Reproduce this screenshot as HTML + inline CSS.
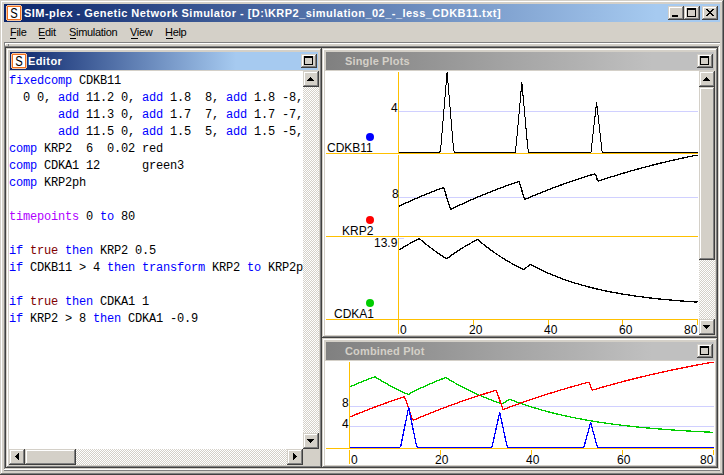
<!DOCTYPE html><html><head><meta charset="utf-8"><style>*{box-sizing:border-box}
html,body{margin:0;padding:0;width:724px;height:475px;overflow:hidden;background:#d4d0c8}
body>div,body>span,body>svg{position:absolute;display:block}
span{white-space:pre}
.chk{background-color:#fff;background-image:linear-gradient(45deg,#d4d0c8 25%,transparent 25%,transparent 75%,#d4d0c8 75%),linear-gradient(45deg,#d4d0c8 25%,transparent 25%,transparent 75%,#d4d0c8 75%);background-size:2px 2px;background-position:0 0,1px 1px}
</style></head><body><div style="left:0px;top:0px;width:724px;height:475px;background:#d4d0c8;"></div>
<div style="left:1px;top:1px;width:722px;height:1px;background:#ffffff;"></div>
<div style="left:1px;top:1px;width:1px;height:473px;background:#ffffff;"></div>
<div style="left:0px;top:474px;width:724px;height:1px;background:#404040;"></div>
<div style="left:723px;top:0px;width:1px;height:475px;background:#404040;"></div>
<div style="left:1px;top:473px;width:722px;height:1px;background:#808080;"></div>
<div style="left:722px;top:1px;width:1px;height:472px;background:#808080;"></div>
<div style="left:4px;top:4px;width:716px;height:18px;background:#0a246a;background:linear-gradient(to right,#0a246a 0px,#a6caf0 652px);"></div>
<svg style="left:6px;top:5px" width="16" height="16"><path d="M1 0h14v1h1v14h-1v1H1v-1H0V1h1z" fill="#f7c7a0"/><rect x="1" y="1" width="14" height="14" fill="#f07020"/><rect x="2" y="2" width="12" height="12" fill="#fff"/></svg>
<span style="left:9px;top:4px;width:10px;text-align:center;font:14px 'Liberation Sans',sans-serif;color:#000;line-height:18px;transform:scaleX(0.8);transform-origin:5px 0">S</span>
<span style="left:24px;top:4px;font:bold 11px 'Liberation Sans',sans-serif;color:#fff;line-height:18px;letter-spacing:0.47px;">SIM-plex - Genetic Network Simulator - [D:\KRP2_simulation_02_-_less_CDKB11.txt]</span>
<div style="left:668px;top:6px;width:16px;height:14px;background:#d4d0c8;"></div>
<div style="left:668px;top:6px;width:16px;height:1px;background:#d4d0c8;"></div>
<div style="left:668px;top:6px;width:1px;height:14px;background:#d4d0c8;"></div>
<div style="left:669px;top:7px;width:14px;height:1px;background:#ffffff;"></div>
<div style="left:669px;top:7px;width:1px;height:12px;background:#ffffff;"></div>
<div style="left:668px;top:19px;width:16px;height:1px;background:#404040;"></div>
<div style="left:683px;top:6px;width:1px;height:14px;background:#404040;"></div>
<div style="left:669px;top:18px;width:14px;height:1px;background:#808080;"></div>
<div style="left:682px;top:7px;width:1px;height:12px;background:#808080;"></div>
<div style="left:672px;top:15px;width:6px;height:2px;background:#000;"></div>
<div style="left:684px;top:6px;width:16px;height:14px;background:#d4d0c8;"></div>
<div style="left:684px;top:6px;width:16px;height:1px;background:#d4d0c8;"></div>
<div style="left:684px;top:6px;width:1px;height:14px;background:#d4d0c8;"></div>
<div style="left:685px;top:7px;width:14px;height:1px;background:#ffffff;"></div>
<div style="left:685px;top:7px;width:1px;height:12px;background:#ffffff;"></div>
<div style="left:684px;top:19px;width:16px;height:1px;background:#404040;"></div>
<div style="left:699px;top:6px;width:1px;height:14px;background:#404040;"></div>
<div style="left:685px;top:18px;width:14px;height:1px;background:#808080;"></div>
<div style="left:698px;top:7px;width:1px;height:12px;background:#808080;"></div>
<div style="left:687px;top:8px;width:9px;height:2px;background:#000;"></div>
<div style="left:687px;top:8px;width:1px;height:9px;background:#000;"></div>
<div style="left:695px;top:8px;width:1px;height:9px;background:#000;"></div>
<div style="left:687px;top:16px;width:9px;height:1px;background:#000;"></div>
<div style="left:702px;top:6px;width:16px;height:14px;background:#d4d0c8;"></div>
<div style="left:702px;top:6px;width:16px;height:1px;background:#d4d0c8;"></div>
<div style="left:702px;top:6px;width:1px;height:14px;background:#d4d0c8;"></div>
<div style="left:703px;top:7px;width:14px;height:1px;background:#ffffff;"></div>
<div style="left:703px;top:7px;width:1px;height:12px;background:#ffffff;"></div>
<div style="left:702px;top:19px;width:16px;height:1px;background:#404040;"></div>
<div style="left:717px;top:6px;width:1px;height:14px;background:#404040;"></div>
<div style="left:703px;top:18px;width:14px;height:1px;background:#808080;"></div>
<div style="left:716px;top:7px;width:1px;height:12px;background:#808080;"></div>
<svg style="left:706px;top:9px" width="8" height="7"><path d="M0 0h2v1h1v1h2V1h1V0h2v1H7v1H6v1H5v1h1v1h1v1h1v1H6V6H5V5H3v1H2v1H0V6h1V5h1V4h1V3H2V2H1V1H0z" fill="#000"/></svg>
<span style="left:10px;top:25px;font:11px 'Liberation Sans',sans-serif;color:#000;line-height:14px;letter-spacing:-0.3px;">File</span>
<span style="left:38px;top:25px;font:11px 'Liberation Sans',sans-serif;color:#000;line-height:14px;letter-spacing:-0.3px;">Edit</span>
<span style="left:69px;top:25px;font:11px 'Liberation Sans',sans-serif;color:#000;line-height:14px;letter-spacing:-0.3px;">Simulation</span>
<span style="left:130px;top:25px;font:11px 'Liberation Sans',sans-serif;color:#000;line-height:14px;letter-spacing:-0.3px;">View</span>
<span style="left:165px;top:25px;font:11px 'Liberation Sans',sans-serif;color:#000;line-height:14px;letter-spacing:-0.3px;">Help</span>
<div style="left:10px;top:38px;width:6px;height:1px;background:#000;"></div>
<div style="left:39px;top:38px;width:6px;height:1px;background:#000;"></div>
<div style="left:70px;top:38px;width:6px;height:1px;background:#000;"></div>
<div style="left:131px;top:38px;width:7px;height:1px;background:#000;"></div>
<div style="left:166px;top:38px;width:7px;height:1px;background:#000;"></div>
<div style="left:4px;top:42px;width:716px;height:1px;background:#808080;"></div>
<div style="left:4px;top:43px;width:716px;height:1px;background:#ffffff;"></div>
<div style="left:4px;top:42px;width:1px;height:4px;background:#808080;"></div>
<div style="left:5px;top:43px;width:1px;height:2px;background:#ffffff;"></div>
<div style="left:8px;top:44px;width:1px;height:2px;background:#808080;"></div>
<div style="left:4px;top:46px;width:716px;height:1px;background:#808080;"></div>
<div style="left:4px;top:46px;width:1px;height:424px;background:#808080;"></div>
<div style="left:5px;top:47px;width:714px;height:1px;background:#404040;"></div>
<div style="left:5px;top:47px;width:1px;height:422px;background:#404040;"></div>
<div style="left:4px;top:469px;width:716px;height:1px;background:#ffffff;"></div>
<div style="left:719px;top:46px;width:1px;height:424px;background:#ffffff;"></div>
<div style="left:5px;top:468px;width:714px;height:1px;background:#d4d0c8;"></div>
<div style="left:718px;top:47px;width:1px;height:422px;background:#d4d0c8;"></div>
<div style="left:4px;top:470px;width:716px;height:1px;background:#808080;"></div>
<div style="left:6px;top:48px;width:712px;height:420px;background:#d4d0c8;"></div>
<div style="left:6px;top:48px;width:316px;height:420px;background:#d4d0c8;"></div>
<div style="left:6px;top:48px;width:316px;height:1px;background:#d4d0c8;"></div>
<div style="left:6px;top:48px;width:1px;height:420px;background:#d4d0c8;"></div>
<div style="left:7px;top:49px;width:314px;height:1px;background:#ffffff;"></div>
<div style="left:7px;top:49px;width:1px;height:418px;background:#ffffff;"></div>
<div style="left:6px;top:467px;width:316px;height:1px;background:#404040;"></div>
<div style="left:321px;top:48px;width:1px;height:420px;background:#404040;"></div>
<div style="left:7px;top:466px;width:314px;height:1px;background:#808080;"></div>
<div style="left:320px;top:49px;width:1px;height:418px;background:#808080;"></div>
<div style="left:10px;top:52px;width:308px;height:18px;background:#0a246a;background:linear-gradient(to right,#0a246a 0px,#a6caf0 226px);"></div>
<svg style="left:11px;top:53px" width="16" height="16"><path d="M1 0h14v1h1v14h-1v1H1v-1H0V1h1z" fill="#f7c7a0"/><rect x="1" y="1" width="14" height="14" fill="#f07020"/><rect x="2" y="2" width="12" height="12" fill="#fff"/></svg>
<span style="left:14px;top:52px;width:10px;text-align:center;font:14px 'Liberation Sans',sans-serif;color:#000;line-height:18px;transform:scaleX(0.8);transform-origin:5px 0">S</span>
<span style="left:28px;top:52px;font:bold 11px 'Liberation Sans',sans-serif;color:#fff;line-height:18px;letter-spacing:0.4px;">Editor</span>
<div style="left:301px;top:54px;width:16px;height:14px;background:#d4d0c8;"></div>
<div style="left:301px;top:54px;width:16px;height:1px;background:#d4d0c8;"></div>
<div style="left:301px;top:54px;width:1px;height:14px;background:#d4d0c8;"></div>
<div style="left:302px;top:55px;width:14px;height:1px;background:#ffffff;"></div>
<div style="left:302px;top:55px;width:1px;height:12px;background:#ffffff;"></div>
<div style="left:301px;top:67px;width:16px;height:1px;background:#404040;"></div>
<div style="left:316px;top:54px;width:1px;height:14px;background:#404040;"></div>
<div style="left:302px;top:66px;width:14px;height:1px;background:#808080;"></div>
<div style="left:315px;top:55px;width:1px;height:12px;background:#808080;"></div>
<div style="left:304px;top:56px;width:9px;height:2px;background:#000;"></div>
<div style="left:304px;top:56px;width:1px;height:9px;background:#000;"></div>
<div style="left:312px;top:56px;width:1px;height:9px;background:#000;"></div>
<div style="left:304px;top:64px;width:9px;height:1px;background:#000;"></div>
<div style="left:9px;top:71px;width:310px;height:394px;background:#fff;"></div>
<div style="left:9px;top:71px;width:294px;height:378px;overflow:hidden"><pre style="margin:0;position:absolute;left:0px;top:2px;font:12px 'Liberation Mono',monospace;letter-spacing:-0.2px;line-height:17px;color:#000"><span style="color:#0000ff">fixedcomp</span> CDKB11
  0 0, <span style="color:#0000ff">add</span> 11.2 0, <span style="color:#0000ff">add</span> 1.8  8, <span style="color:#0000ff">add</span> 1.8 -8,
       <span style="color:#0000ff">add</span> 11.3 0, <span style="color:#0000ff">add</span> 1.7  7, <span style="color:#0000ff">add</span> 1.7 -7,
       <span style="color:#0000ff">add</span> 11.5 0, <span style="color:#0000ff">add</span> 1.5  5, <span style="color:#0000ff">add</span> 1.5 -5,
<span style="color:#0000ff">comp</span> KRP2  6  0.02 red
<span style="color:#0000ff">comp</span> CDKA1 12      green3
<span style="color:#0000ff">comp</span> KRP2ph

<span style="color:#b000ff">timepoints</span> 0 <span style="color:#0000ff">to</span> 80

<span style="color:#0000ff">if</span> <span style="color:#800000">true</span> <span style="color:#0000ff">then</span> KRP2 0.5
<span style="color:#0000ff">if</span> CDKB11 &gt; 4 <span style="color:#0000ff">then</span> <span style="color:#0000ff">transform</span> KRP2 <span style="color:#0000ff">to</span> KRP2p

<span style="color:#0000ff">if</span> <span style="color:#800000">true</span> <span style="color:#0000ff">then</span> CDKA1 1
<span style="color:#0000ff">if</span> KRP2 &gt; 8 <span style="color:#0000ff">then</span> CDKA1 -0.9</pre></div>
<div class="chk" style="left:303px;top:87px;width:16px;height:346px"></div>
<div style="left:303px;top:71px;width:16px;height:16px;background:#d4d0c8;"></div>
<div style="left:303px;top:71px;width:16px;height:1px;background:#d4d0c8;"></div>
<div style="left:303px;top:71px;width:1px;height:16px;background:#d4d0c8;"></div>
<div style="left:304px;top:72px;width:14px;height:1px;background:#ffffff;"></div>
<div style="left:304px;top:72px;width:1px;height:14px;background:#ffffff;"></div>
<div style="left:303px;top:86px;width:16px;height:1px;background:#404040;"></div>
<div style="left:318px;top:71px;width:1px;height:16px;background:#404040;"></div>
<div style="left:304px;top:85px;width:14px;height:1px;background:#808080;"></div>
<div style="left:317px;top:72px;width:1px;height:14px;background:#808080;"></div>
<svg style="left:307px;top:77px" width="7" height="4"><path d="M3 0h1v1h1v1h1v1h1v1H0V3h1V2h1V1h1z" fill="#000"/></svg>
<div style="left:303px;top:433px;width:16px;height:16px;background:#d4d0c8;"></div>
<div style="left:303px;top:433px;width:16px;height:1px;background:#d4d0c8;"></div>
<div style="left:303px;top:433px;width:1px;height:16px;background:#d4d0c8;"></div>
<div style="left:304px;top:434px;width:14px;height:1px;background:#ffffff;"></div>
<div style="left:304px;top:434px;width:1px;height:14px;background:#ffffff;"></div>
<div style="left:303px;top:448px;width:16px;height:1px;background:#404040;"></div>
<div style="left:318px;top:433px;width:1px;height:16px;background:#404040;"></div>
<div style="left:304px;top:447px;width:14px;height:1px;background:#808080;"></div>
<div style="left:317px;top:434px;width:1px;height:14px;background:#808080;"></div>
<svg style="left:307px;top:439px" width="7" height="4"><path d="M0 0h7v1H6v1H5v1H4v1H3V3H2V2H1V1H0z" fill="#000"/></svg>
<div class="chk" style="left:25px;top:449px;width:262px;height:16px"></div>
<div style="left:9px;top:449px;width:16px;height:16px;background:#d4d0c8;"></div>
<div style="left:9px;top:449px;width:16px;height:1px;background:#d4d0c8;"></div>
<div style="left:9px;top:449px;width:1px;height:16px;background:#d4d0c8;"></div>
<div style="left:10px;top:450px;width:14px;height:1px;background:#ffffff;"></div>
<div style="left:10px;top:450px;width:1px;height:14px;background:#ffffff;"></div>
<div style="left:9px;top:464px;width:16px;height:1px;background:#404040;"></div>
<div style="left:24px;top:449px;width:1px;height:16px;background:#404040;"></div>
<div style="left:10px;top:463px;width:14px;height:1px;background:#808080;"></div>
<div style="left:23px;top:450px;width:1px;height:14px;background:#808080;"></div>
<svg style="left:15px;top:453px" width="4" height="7"><path d="M3 0h1v7H3V6H2V5H1V4H0V3h1V2h1V1h1z" fill="#000"/></svg>
<div style="left:25px;top:449px;width:51px;height:16px;background:#d4d0c8;"></div>
<div style="left:25px;top:449px;width:51px;height:1px;background:#d4d0c8;"></div>
<div style="left:25px;top:449px;width:1px;height:16px;background:#d4d0c8;"></div>
<div style="left:26px;top:450px;width:49px;height:1px;background:#ffffff;"></div>
<div style="left:26px;top:450px;width:1px;height:14px;background:#ffffff;"></div>
<div style="left:25px;top:464px;width:51px;height:1px;background:#404040;"></div>
<div style="left:75px;top:449px;width:1px;height:16px;background:#404040;"></div>
<div style="left:26px;top:463px;width:49px;height:1px;background:#808080;"></div>
<div style="left:74px;top:450px;width:1px;height:14px;background:#808080;"></div>
<div style="left:287px;top:449px;width:16px;height:16px;background:#d4d0c8;"></div>
<div style="left:287px;top:449px;width:16px;height:1px;background:#d4d0c8;"></div>
<div style="left:287px;top:449px;width:1px;height:16px;background:#d4d0c8;"></div>
<div style="left:288px;top:450px;width:14px;height:1px;background:#ffffff;"></div>
<div style="left:288px;top:450px;width:1px;height:14px;background:#ffffff;"></div>
<div style="left:287px;top:464px;width:16px;height:1px;background:#404040;"></div>
<div style="left:302px;top:449px;width:1px;height:16px;background:#404040;"></div>
<div style="left:288px;top:463px;width:14px;height:1px;background:#808080;"></div>
<div style="left:301px;top:450px;width:1px;height:14px;background:#808080;"></div>
<svg style="left:293px;top:453px" width="4" height="7"><path d="M0 0h1v1h1v1h1v1h1v1H3v1H2v1H1v1H0z" fill="#000"/></svg>
<div style="left:303px;top:449px;width:16px;height:16px;background:#d4d0c8;"></div>
<div style="left:322px;top:48px;width:396px;height:290px;background:#d4d0c8;"></div>
<div style="left:322px;top:48px;width:396px;height:1px;background:#d4d0c8;"></div>
<div style="left:322px;top:48px;width:1px;height:290px;background:#d4d0c8;"></div>
<div style="left:323px;top:49px;width:394px;height:1px;background:#ffffff;"></div>
<div style="left:323px;top:49px;width:1px;height:288px;background:#ffffff;"></div>
<div style="left:322px;top:337px;width:396px;height:1px;background:#404040;"></div>
<div style="left:717px;top:48px;width:1px;height:290px;background:#404040;"></div>
<div style="left:323px;top:336px;width:394px;height:1px;background:#808080;"></div>
<div style="left:716px;top:49px;width:1px;height:288px;background:#808080;"></div>
<div style="left:326px;top:52px;width:388px;height:18px;background:#808080;background:linear-gradient(to right,#808080 0px,#c0c0c0 326px);"></div>
<span style="left:345px;top:52px;font:bold 11px 'Liberation Sans',sans-serif;color:#d4d0c8;line-height:18px;letter-spacing:0.15px;">Single Plots</span>
<div style="left:697px;top:54px;width:16px;height:14px;background:#d4d0c8;"></div>
<div style="left:697px;top:54px;width:16px;height:1px;background:#d4d0c8;"></div>
<div style="left:697px;top:54px;width:1px;height:14px;background:#d4d0c8;"></div>
<div style="left:698px;top:55px;width:14px;height:1px;background:#ffffff;"></div>
<div style="left:698px;top:55px;width:1px;height:12px;background:#ffffff;"></div>
<div style="left:697px;top:67px;width:16px;height:1px;background:#404040;"></div>
<div style="left:712px;top:54px;width:1px;height:14px;background:#404040;"></div>
<div style="left:698px;top:66px;width:14px;height:1px;background:#808080;"></div>
<div style="left:711px;top:55px;width:1px;height:12px;background:#808080;"></div>
<div style="left:700px;top:56px;width:9px;height:2px;background:#000;"></div>
<div style="left:700px;top:56px;width:1px;height:9px;background:#000;"></div>
<div style="left:708px;top:56px;width:1px;height:9px;background:#000;"></div>
<div style="left:700px;top:64px;width:9px;height:1px;background:#000;"></div>
<div style="left:325px;top:71px;width:390px;height:264px;background:#fff;"></div>
<div class="chk" style="left:699px;top:87px;width:16px;height:232px"></div>
<div style="left:699px;top:71px;width:16px;height:16px;background:#d4d0c8;"></div>
<div style="left:699px;top:71px;width:16px;height:1px;background:#d4d0c8;"></div>
<div style="left:699px;top:71px;width:1px;height:16px;background:#d4d0c8;"></div>
<div style="left:700px;top:72px;width:14px;height:1px;background:#ffffff;"></div>
<div style="left:700px;top:72px;width:1px;height:14px;background:#ffffff;"></div>
<div style="left:699px;top:86px;width:16px;height:1px;background:#404040;"></div>
<div style="left:714px;top:71px;width:1px;height:16px;background:#404040;"></div>
<div style="left:700px;top:85px;width:14px;height:1px;background:#808080;"></div>
<div style="left:713px;top:72px;width:1px;height:14px;background:#808080;"></div>
<svg style="left:703px;top:77px" width="7" height="4"><path d="M3 0h1v1h1v1h1v1h1v1H0V3h1V2h1V1h1z" fill="#000"/></svg>
<div style="left:699px;top:87px;width:16px;height:173px;background:#d4d0c8;"></div>
<div style="left:699px;top:87px;width:16px;height:1px;background:#d4d0c8;"></div>
<div style="left:699px;top:87px;width:1px;height:173px;background:#d4d0c8;"></div>
<div style="left:700px;top:88px;width:14px;height:1px;background:#ffffff;"></div>
<div style="left:700px;top:88px;width:1px;height:171px;background:#ffffff;"></div>
<div style="left:699px;top:259px;width:16px;height:1px;background:#404040;"></div>
<div style="left:714px;top:87px;width:1px;height:173px;background:#404040;"></div>
<div style="left:700px;top:258px;width:14px;height:1px;background:#808080;"></div>
<div style="left:713px;top:88px;width:1px;height:171px;background:#808080;"></div>
<div style="left:699px;top:319px;width:16px;height:16px;background:#d4d0c8;"></div>
<div style="left:699px;top:319px;width:16px;height:1px;background:#d4d0c8;"></div>
<div style="left:699px;top:319px;width:1px;height:16px;background:#d4d0c8;"></div>
<div style="left:700px;top:320px;width:14px;height:1px;background:#ffffff;"></div>
<div style="left:700px;top:320px;width:1px;height:14px;background:#ffffff;"></div>
<div style="left:699px;top:334px;width:16px;height:1px;background:#404040;"></div>
<div style="left:714px;top:319px;width:1px;height:16px;background:#404040;"></div>
<div style="left:700px;top:333px;width:14px;height:1px;background:#808080;"></div>
<div style="left:713px;top:320px;width:1px;height:14px;background:#808080;"></div>
<svg style="left:703px;top:325px" width="7" height="4"><path d="M0 0h7v1H6v1H5v1H4v1H3V3H2V2H1V1H0z" fill="#000"/></svg>
<div style="left:322px;top:338px;width:396px;height:130px;background:#d4d0c8;"></div>
<div style="left:322px;top:338px;width:396px;height:1px;background:#d4d0c8;"></div>
<div style="left:322px;top:338px;width:1px;height:130px;background:#d4d0c8;"></div>
<div style="left:323px;top:339px;width:394px;height:1px;background:#ffffff;"></div>
<div style="left:323px;top:339px;width:1px;height:128px;background:#ffffff;"></div>
<div style="left:322px;top:467px;width:396px;height:1px;background:#404040;"></div>
<div style="left:717px;top:338px;width:1px;height:130px;background:#404040;"></div>
<div style="left:323px;top:466px;width:394px;height:1px;background:#808080;"></div>
<div style="left:716px;top:339px;width:1px;height:128px;background:#808080;"></div>
<div style="left:326px;top:342px;width:388px;height:18px;background:#808080;background:linear-gradient(to right,#808080 0px,#c0c0c0 326px);"></div>
<span style="left:345px;top:342px;font:bold 11px 'Liberation Sans',sans-serif;color:#d4d0c8;line-height:18px;letter-spacing:0.15px;">Combined Plot</span>
<div style="left:697px;top:344px;width:16px;height:14px;background:#d4d0c8;"></div>
<div style="left:697px;top:344px;width:16px;height:1px;background:#d4d0c8;"></div>
<div style="left:697px;top:344px;width:1px;height:14px;background:#d4d0c8;"></div>
<div style="left:698px;top:345px;width:14px;height:1px;background:#ffffff;"></div>
<div style="left:698px;top:345px;width:1px;height:12px;background:#ffffff;"></div>
<div style="left:697px;top:357px;width:16px;height:1px;background:#404040;"></div>
<div style="left:712px;top:344px;width:1px;height:14px;background:#404040;"></div>
<div style="left:698px;top:356px;width:14px;height:1px;background:#808080;"></div>
<div style="left:711px;top:345px;width:1px;height:12px;background:#808080;"></div>
<div style="left:700px;top:346px;width:9px;height:2px;background:#000;"></div>
<div style="left:700px;top:346px;width:1px;height:9px;background:#000;"></div>
<div style="left:708px;top:346px;width:1px;height:9px;background:#000;"></div>
<div style="left:700px;top:354px;width:9px;height:1px;background:#000;"></div>
<div style="left:325px;top:361px;width:390px;height:104px;background:#fff;"></div>
<svg style="left:325px;top:71px" width="374" height="264" shape-rendering="crispEdges">
<rect x="1" y="82" width="372" height="1" fill="#ffc000"/>
<rect x="1" y="165" width="372" height="1" fill="#ffc000"/>
<rect x="1" y="248" width="372" height="1" fill="#ffc000"/>
<rect x="73" y="1" width="1" height="81" fill="#ffc000"/>
<rect x="73" y="84" width="1" height="81" fill="#ffc000"/>
<rect x="73" y="167" width="1" height="96" fill="#ffc000"/>
<rect x="148" y="249" width="1" height="5" fill="#ffc000"/>
<rect x="223" y="249" width="1" height="5" fill="#ffc000"/>
<rect x="297" y="249" width="1" height="5" fill="#ffc000"/>
<rect x="372" y="249" width="1" height="5" fill="#ffc000"/>
<rect x="74" y="40" width="299" height="1" fill="#d0d0ff"/>
<rect x="74" y="126" width="299" height="1" fill="#d0d0ff"/>
<rect x="74" y="167" width="5" height="1" fill="#d0d0ff"/>
<polyline points="73.50,81.50 74.43,81.50 75.37,81.50 76.30,81.50 77.24,81.50 78.17,81.50 79.11,81.50 80.04,81.50 80.98,81.50 81.91,81.50 82.84,81.50 83.78,81.50 84.71,81.50 85.65,81.50 86.58,81.50 87.52,81.50 88.45,81.50 89.38,81.50 90.32,81.50 91.25,81.50 92.19,81.50 93.12,81.50 94.06,81.50 94.99,81.50 95.93,81.50 96.86,81.50 97.79,81.50 98.73,81.50 99.66,81.50 100.60,81.50 101.53,81.50 102.47,81.50 103.40,81.50 104.33,81.50 105.27,81.50 106.20,81.50 107.14,81.50 108.07,81.50 109.01,81.50 109.94,81.50 110.88,81.50 111.81,81.50 112.74,81.50 113.68,81.50 114.61,81.50 115.55,79.28 116.48,68.17 117.42,57.06 118.35,45.94 119.28,34.83 120.22,23.72 121.15,12.61 122.09,1.50 123.02,12.61 123.96,23.72 124.89,34.83 125.82,45.94 126.76,57.06 127.69,68.17 128.63,79.28 129.56,81.50 130.50,81.50 131.43,81.50 132.37,81.50 133.30,81.50 134.23,81.50 135.17,81.50 136.10,81.50 137.04,81.50 137.97,81.50 138.91,81.50 139.84,81.50 140.77,81.50 141.71,81.50 142.64,81.50 143.58,81.50 144.51,81.50 145.45,81.50 146.38,81.50 147.32,81.50 148.25,81.50 149.18,81.50 150.12,81.50 151.05,81.50 151.99,81.50 152.92,81.50 153.86,81.50 154.79,81.50 155.73,81.50 156.66,81.50 157.59,81.50 158.53,81.50 159.46,81.50 160.40,81.50 161.33,81.50 162.27,81.50 163.20,81.50 164.13,81.50 165.07,81.50 166.00,81.50 166.94,81.50 167.87,81.50 168.81,81.50 169.74,81.50 170.68,81.50 171.61,81.50 172.54,81.50 173.48,81.50 174.41,81.50 175.35,81.50 176.28,81.50 177.22,81.50 178.15,81.50 179.08,81.50 180.02,81.50 180.95,81.50 181.89,81.50 182.82,81.50 183.76,81.50 184.69,81.50 185.62,81.50 186.56,81.50 187.49,81.50 188.43,81.50 189.36,81.50 190.30,81.50 191.23,73.26 192.17,62.97 193.10,52.68 194.03,42.38 194.97,32.09 195.90,21.79 196.84,11.50 197.77,21.79 198.71,32.09 199.64,42.38 200.58,52.68 201.51,62.97 202.44,73.26 203.38,81.50 204.31,81.50 205.25,81.50 206.18,81.50 207.12,81.50 208.05,81.50 208.98,81.50 209.92,81.50 210.85,81.50 211.79,81.50 212.72,81.50 213.66,81.50 214.59,81.50 215.52,81.50 216.46,81.50 217.39,81.50 218.33,81.50 219.26,81.50 220.20,81.50 221.13,81.50 222.07,81.50 223.00,81.50 223.93,81.50 224.87,81.50 225.80,81.50 226.74,81.50 227.67,81.50 228.61,81.50 229.54,81.50 230.48,81.50 231.41,81.50 232.34,81.50 233.28,81.50 234.21,81.50 235.15,81.50 236.08,81.50 237.02,81.50 237.95,81.50 238.88,81.50 239.82,81.50 240.75,81.50 241.69,81.50 242.62,81.50 243.56,81.50 244.49,81.50 245.42,81.50 246.36,81.50 247.29,81.50 248.23,81.50 249.16,81.50 250.10,81.50 251.03,81.50 251.97,81.50 252.90,81.50 253.83,81.50 254.77,81.50 255.70,81.50 256.64,81.50 257.57,81.50 258.51,81.50 259.44,81.50 260.38,81.50 261.31,81.50 262.24,81.50 263.18,81.50 264.11,81.50 265.05,81.50 265.98,81.50 266.92,73.17 267.85,64.83 268.78,56.50 269.72,48.17 270.65,39.83 271.59,31.50 272.52,39.83 273.46,48.17 274.39,56.50 275.33,64.83 276.26,73.17 277.19,81.50 278.13,81.50 279.06,81.50 280.00,81.50 280.93,81.50 281.87,81.50 282.80,81.50 283.73,81.50 284.67,81.50 285.60,81.50 286.54,81.50 287.47,81.50 288.41,81.50 289.34,81.50 290.27,81.50 291.21,81.50 292.14,81.50 293.08,81.50 294.01,81.50 294.95,81.50 295.88,81.50 296.82,81.50 297.75,81.50 298.68,81.50 299.62,81.50 300.55,81.50 301.49,81.50 302.42,81.50 303.36,81.50 304.29,81.50 305.23,81.50 306.16,81.50 307.09,81.50 308.03,81.50 308.96,81.50 309.90,81.50 310.83,81.50 311.77,81.50 312.70,81.50 313.63,81.50 314.57,81.50 315.50,81.50 316.44,81.50 317.37,81.50 318.31,81.50 319.24,81.50 320.17,81.50 321.11,81.50 322.04,81.50 322.98,81.50 323.91,81.50 324.85,81.50 325.78,81.50 326.72,81.50 327.65,81.50 328.58,81.50 329.52,81.50 330.45,81.50 331.39,81.50 332.32,81.50 333.26,81.50 334.19,81.50 335.12,81.50 336.06,81.50 336.99,81.50 337.93,81.50 338.86,81.50 339.80,81.50 340.73,81.50 341.67,81.50 342.60,81.50 343.53,81.50 344.47,81.50 345.40,81.50 346.34,81.50 347.27,81.50 348.21,81.50 349.14,81.50 350.08,81.50 351.01,81.50 351.94,81.50 352.88,81.50 353.81,81.50 354.75,81.50 355.68,81.50 356.62,81.50 357.55,81.50 358.48,81.50 359.42,81.50 360.35,81.50 361.29,81.50 362.22,81.50 363.16,81.50 364.09,81.50 365.02,81.50 365.96,81.50 366.89,81.50 367.83,81.50 368.76,81.50 369.70,81.50 370.63,81.50 371.57,81.50 372.50,81.50" fill="none" stroke="#000" stroke-width="1" stroke-linejoin="bevel" shape-rendering="crispEdges"/>
<polyline points="73.50,135.46 74.43,135.01 75.37,134.57 76.30,134.14 77.24,133.70 78.17,133.26 79.11,132.83 80.04,132.40 80.98,131.98 81.91,131.55 82.84,131.13 83.78,130.70 84.71,130.29 85.65,129.87 86.58,129.45 87.52,129.04 88.45,128.63 89.38,128.22 90.32,127.81 91.25,127.41 92.19,127.01 93.12,126.61 94.06,126.21 94.99,125.81 95.93,125.41 96.86,125.02 97.79,124.63 98.73,124.24 99.66,123.86 100.60,123.47 101.53,123.09 102.47,122.71 103.40,122.33 104.33,121.95 105.27,121.57 106.20,121.20 107.14,120.83 108.07,120.46 109.01,120.09 109.94,119.72 110.88,119.36 111.81,119.00 112.74,118.64 113.68,118.28 114.61,117.92 115.55,117.56 116.48,117.21 117.42,116.86 118.35,116.51 119.28,118.12 120.22,121.26 121.15,124.39 122.09,127.49 123.02,130.59 123.96,133.67 124.89,136.73 125.82,138.38 126.76,137.92 127.69,137.46 128.63,137.01 129.56,136.56 130.50,136.11 131.43,135.67 132.37,135.22 133.30,134.78 134.23,134.34 135.17,133.90 136.10,133.47 137.04,133.03 137.97,132.60 138.91,132.17 139.84,131.75 140.77,131.32 141.71,130.90 142.64,130.48 143.58,130.06 144.51,129.65 145.45,129.23 146.38,128.82 147.32,128.41 148.25,128.00 149.18,127.60 150.12,127.19 151.05,126.79 151.99,126.39 152.92,125.99 153.86,125.60 154.79,125.21 155.73,124.81 156.66,124.42 157.59,124.04 158.53,123.65 159.46,123.27 160.40,122.88 161.33,122.50 162.27,122.12 163.20,121.75 164.13,121.37 165.07,121.00 166.00,120.63 166.94,120.26 167.87,119.89 168.81,119.53 169.74,119.17 170.68,118.80 171.61,118.44 172.54,118.09 173.48,117.73 174.41,117.38 175.35,117.02 176.28,116.67 177.22,116.32 178.15,115.97 179.08,115.63 180.02,115.28 180.95,114.94 181.89,114.60 182.82,114.26 183.76,113.93 184.69,113.59 185.62,113.26 186.56,112.92 187.49,112.59 188.43,112.26 189.36,111.94 190.30,111.61 191.23,111.29 192.17,110.97 193.10,110.64 194.03,110.33 194.97,113.09 195.90,116.25 196.84,119.40 197.77,122.54 198.71,125.65 199.64,128.48 200.58,128.07 201.51,127.66 202.44,127.26 203.38,126.86 204.31,126.46 205.25,126.06 206.18,125.66 207.12,125.27 208.05,124.88 208.98,124.49 209.92,124.10 210.85,123.71 211.79,123.33 212.72,122.94 213.66,122.56 214.59,122.19 215.52,121.81 216.46,121.43 217.39,121.06 218.33,120.69 219.26,120.32 220.20,119.95 221.13,119.59 222.07,119.22 223.00,118.86 223.93,118.50 224.87,118.14 225.80,117.79 226.74,117.43 227.67,117.08 228.61,116.73 229.54,116.38 230.48,116.03 231.41,115.68 232.34,115.34 233.28,115.00 234.21,114.66 235.15,114.32 236.08,113.98 237.02,113.64 237.95,113.31 238.88,112.98 239.82,112.65 240.75,112.32 241.69,111.99 242.62,111.66 243.56,111.34 244.49,111.02 245.42,110.70 246.36,110.38 247.29,110.06 248.23,109.74 249.16,109.43 250.10,109.11 251.03,108.80 251.97,108.49 252.90,108.18 253.83,107.88 254.77,107.57 255.70,107.27 256.64,106.97 257.57,106.66 258.51,106.37 259.44,106.07 260.38,105.77 261.31,105.48 262.24,105.18 263.18,104.89 264.11,104.60 265.05,104.31 265.98,104.02 266.92,103.74 267.85,103.45 268.78,103.17 269.72,102.89 270.65,103.31 271.59,106.52 272.52,109.72 273.46,110.10 274.39,109.79 275.33,109.47 276.26,109.16 277.19,108.85 278.13,108.54 279.06,108.23 280.00,107.92 280.93,107.62 281.87,107.31 282.80,107.01 283.73,106.71 284.67,106.41 285.60,106.11 286.54,105.81 287.47,105.52 288.41,105.23 289.34,104.93 290.27,104.64 291.21,104.35 292.14,104.07 293.08,103.78 294.01,103.49 294.95,103.21 295.88,102.93 296.82,102.65 297.75,102.37 298.68,102.09 299.62,101.81 300.55,101.54 301.49,101.27 302.42,100.99 303.36,100.72 304.29,100.45 305.23,100.18 306.16,99.92 307.09,99.65 308.03,99.39 308.96,99.12 309.90,98.86 310.83,98.60 311.77,98.34 312.70,98.09 313.63,97.83 314.57,97.57 315.50,97.32 316.44,97.07 317.37,96.82 318.31,96.57 319.24,96.32 320.17,96.07 321.11,95.82 322.04,95.58 322.98,95.33 323.91,95.09 324.85,94.85 325.78,94.61 326.72,94.37 327.65,94.13 328.58,93.89 329.52,93.66 330.45,93.42 331.39,93.19 332.32,92.96 333.26,92.73 334.19,92.50 335.12,92.27 336.06,92.04 336.99,91.82 337.93,91.59 338.86,91.37 339.80,91.14 340.73,90.92 341.67,90.70 342.60,90.48 343.53,90.26 344.47,90.04 345.40,89.83 346.34,89.61 347.27,89.40 348.21,89.18 349.14,88.97 350.08,88.76 351.01,88.55 351.94,88.34 352.88,88.13 353.81,87.93 354.75,87.72 355.68,87.52 356.62,87.31 357.55,87.11 358.48,86.91 359.42,86.71 360.35,86.51 361.29,86.31 362.22,86.11 363.16,85.91 364.09,85.72 365.02,85.52 365.96,85.33 366.89,85.14 367.83,84.95 368.76,84.75 369.70,84.56 370.63,84.38 371.57,84.19 372.50,84.00" fill="none" stroke="#000" stroke-width="1.3" stroke-linejoin="bevel" shape-rendering="crispEdges"/>
<polyline points="73.50,179.36 74.43,178.75 75.37,178.16 76.30,177.57 77.24,176.99 78.17,176.41 79.11,175.85 80.04,175.28 80.98,174.73 81.91,174.18 82.84,173.64 83.78,173.11 84.71,172.58 85.65,172.06 86.58,171.54 87.52,171.03 88.45,170.53 89.38,170.03 90.32,169.54 91.25,169.05 92.19,168.57 93.12,168.10 94.06,167.63 94.99,168.09 95.93,168.90 96.86,169.70 97.79,170.49 98.73,171.28 99.66,172.05 100.60,172.81 101.53,173.57 102.47,174.32 103.40,175.05 104.33,175.78 105.27,176.50 106.20,177.21 107.14,177.91 108.07,178.61 109.01,179.29 109.94,179.97 110.88,180.64 111.81,181.30 112.74,181.96 113.68,182.60 114.61,183.24 115.55,183.87 116.48,184.49 117.42,185.11 118.35,185.72 119.28,186.32 120.22,186.91 121.15,187.50 122.09,187.51 123.02,186.81 123.96,186.12 124.89,185.44 125.82,184.76 126.76,184.09 127.69,183.43 128.63,182.78 129.56,182.14 130.50,181.50 131.43,180.87 132.37,180.25 133.30,179.64 134.23,179.03 135.17,178.43 136.10,177.84 137.04,177.26 137.97,176.68 138.91,176.11 139.84,175.55 140.77,174.99 141.71,174.44 142.64,173.89 143.58,173.36 144.51,172.82 145.45,172.30 146.38,171.78 147.32,171.27 148.25,170.76 149.18,170.26 150.12,169.77 151.05,169.28 151.99,168.80 152.92,168.68 153.86,169.48 154.79,170.28 155.73,171.06 156.66,171.84 157.59,172.61 158.53,173.36 159.46,174.11 160.40,174.85 161.33,175.58 162.27,176.30 163.20,177.02 164.13,177.72 165.07,178.42 166.00,179.10 166.94,179.78 167.87,180.46 168.81,181.12 169.74,181.78 170.68,182.42 171.61,183.06 172.54,183.70 173.48,184.32 174.41,184.94 175.35,185.55 176.28,186.15 177.22,186.75 178.15,187.34 179.08,187.92 180.02,188.49 180.95,189.06 181.89,189.62 182.82,190.18 183.76,190.72 184.69,191.27 185.62,191.80 186.56,192.33 187.49,192.85 188.43,193.37 189.36,193.88 190.30,194.38 191.23,194.88 192.17,195.37 193.10,195.85 194.03,196.33 194.97,196.81 195.90,197.28 196.84,197.74 197.77,198.20 198.71,198.65 199.64,198.02 200.58,197.19 201.51,196.38 202.44,195.57 203.38,194.78 204.31,193.99 205.25,193.37 206.18,193.88 207.12,194.38 208.05,194.88 208.98,195.37 209.92,195.85 210.85,196.33 211.79,196.81 212.72,197.28 213.66,197.74 214.59,198.20 215.52,198.65 216.46,199.10 217.39,199.54 218.33,199.97 219.26,200.40 220.20,200.83 221.13,201.25 222.07,201.67 223.00,202.08 223.93,202.48 224.87,202.88 225.80,203.28 226.74,203.67 227.67,204.06 228.61,204.44 229.54,204.82 230.48,205.19 231.41,205.56 232.34,205.92 233.28,206.28 234.21,206.64 235.15,206.99 236.08,207.34 237.02,207.68 237.95,208.02 238.88,208.35 239.82,208.68 240.75,209.01 241.69,209.33 242.62,209.65 243.56,209.97 244.49,210.28 245.42,210.59 246.36,210.89 247.29,211.19 248.23,211.49 249.16,211.78 250.10,212.07 251.03,212.36 251.97,212.64 252.90,212.92 253.83,213.20 254.77,213.47 255.70,213.74 256.64,214.01 257.57,214.27 258.51,214.53 259.44,214.79 260.38,215.04 261.31,215.29 262.24,215.54 263.18,215.79 264.11,216.03 265.05,216.27 265.98,216.51 266.92,216.74 267.85,216.97 268.78,217.20 269.72,217.42 270.65,217.65 271.59,217.87 272.52,218.08 273.46,218.30 274.39,218.51 275.33,218.72 276.26,218.93 277.19,219.13 278.13,219.33 279.06,219.53 280.00,219.73 280.93,219.93 281.87,220.12 282.80,220.31 283.73,220.50 284.67,220.68 285.60,220.87 286.54,221.05 287.47,221.23 288.41,221.41 289.34,221.58 290.27,221.75 291.21,221.92 292.14,222.09 293.08,222.26 294.01,222.43 294.95,222.59 295.88,222.75 296.82,222.91 297.75,223.07 298.68,223.22 299.62,223.37 300.55,223.53 301.49,223.68 302.42,223.82 303.36,223.97 304.29,224.11 305.23,224.26 306.16,224.40 307.09,224.54 308.03,224.68 308.96,224.81 309.90,224.95 310.83,225.08 311.77,225.21 312.70,225.34 313.63,225.47 314.57,225.59 315.50,225.72 316.44,225.84 317.37,225.97 318.31,226.09 319.24,226.21 320.17,226.32 321.11,226.44 322.04,226.55 322.98,226.67 323.91,226.78 324.85,226.89 325.78,227.00 326.72,227.11 327.65,227.22 328.58,227.32 329.52,227.43 330.45,227.53 331.39,227.63 332.32,227.73 333.26,227.83 334.19,227.93 335.12,228.03 336.06,228.12 336.99,228.22 337.93,228.31 338.86,228.41 339.80,228.50 340.73,228.59 341.67,228.68 342.60,228.77 343.53,228.85 344.47,228.94 345.40,229.02 346.34,229.11 347.27,229.19 348.21,229.27 349.14,229.36 350.08,229.44 351.01,229.52 351.94,229.59 352.88,229.67 353.81,229.75 354.75,229.82 355.68,229.90 356.62,229.97 357.55,230.04 358.48,230.12 359.42,230.19 360.35,230.26 361.29,230.33 362.22,230.40 363.16,230.46 364.09,230.53 365.02,230.60 365.96,230.66 366.89,230.73 367.83,230.79 368.76,230.85 369.70,230.92 370.63,230.98 371.57,231.04 372.50,231.10" fill="none" stroke="#000" stroke-width="1.3" stroke-linejoin="bevel" shape-rendering="crispEdges"/>
<rect x="73" y="1" width="1" height="81" fill="#ffc000"/>
<rect x="73" y="84" width="1" height="81" fill="#ffc000"/>
<rect x="73" y="167" width="1" height="96" fill="#ffc000"/>
</svg>
<span style="left:327px;top:141px;font:12px 'Liberation Sans',sans-serif;color:#000;line-height:14px;">CDKB11</span>
<span style="left:342px;top:224px;font:12px 'Liberation Sans',sans-serif;color:#000;line-height:14px;">KRP2</span>
<span style="left:334px;top:307px;font:12px 'Liberation Sans',sans-serif;color:#000;line-height:14px;">CDKA1</span>
<svg style="left:366px;top:133px" width="8" height="8"><circle cx="4" cy="4" r="4" fill="#0000ff"/></svg>
<svg style="left:366px;top:216px" width="8" height="8"><circle cx="4" cy="4" r="4" fill="#ff0000"/></svg>
<svg style="left:366px;top:299px" width="8" height="8"><circle cx="4" cy="4" r="4" fill="#00cd00"/></svg>
<span style="left:391px;top:101px;font:12px 'Liberation Sans',sans-serif;color:#000;line-height:14px;">4</span>
<span style="left:392px;top:187px;font:12px 'Liberation Sans',sans-serif;color:#000;line-height:14px;">8</span>
<span style="left:374px;top:236px;font:12px 'Liberation Sans',sans-serif;color:#000;line-height:14px;">13.9</span>
<span style="left:400px;top:323px;font:12px 'Liberation Sans',sans-serif;color:#000;line-height:14px;">0</span>
<span style="left:469px;top:323px;font:12px 'Liberation Sans',sans-serif;color:#000;line-height:14px;">20</span>
<span style="left:544px;top:323px;font:12px 'Liberation Sans',sans-serif;color:#000;line-height:14px;">40</span>
<span style="left:619px;top:323px;font:12px 'Liberation Sans',sans-serif;color:#000;line-height:14px;">60</span>
<span style="left:684px;top:323px;font:12px 'Liberation Sans',sans-serif;color:#000;line-height:14px;">80</span>
<svg style="left:325px;top:361px" width="390" height="104" shape-rendering="crispEdges">
<rect x="24" y="1" width="1" height="87" fill="#ffc000"/>
<rect x="24" y="89" width="1" height="14" fill="#ffc000"/>
<rect x="1" y="87" width="388" height="1" fill="#ffc000"/>
<rect x="25" y="45" width="364" height="1" fill="#d0d0ff"/>
<rect x="25" y="65" width="364" height="1" fill="#d0d0ff"/>
<rect x="115" y="89" width="1" height="5" fill="#ffc000"/>
<rect x="206" y="89" width="1" height="5" fill="#ffc000"/>
<rect x="297" y="89" width="1" height="5" fill="#ffc000"/>
<rect x="388" y="89" width="1" height="5" fill="#ffc000"/>
<polyline points="24.50,26.10 25.64,25.57 26.77,25.05 27.91,24.54 29.05,24.03 30.19,23.53 31.32,23.03 32.46,22.54 33.60,22.06 34.74,21.58 35.88,21.10 37.01,20.64 38.15,20.18 39.29,19.72 40.43,19.27 41.56,18.82 42.70,18.38 43.84,17.95 44.98,17.52 46.11,17.09 47.25,16.67 48.39,16.26 49.52,15.85 50.66,16.25 51.80,16.96 52.94,17.66 54.07,18.35 55.21,19.04 56.35,19.71 57.49,20.38 58.62,21.04 59.76,21.69 60.90,22.34 62.04,22.97 63.18,23.60 64.31,24.22 65.45,24.84 66.59,25.44 67.73,26.04 68.86,26.64 70.00,27.22 71.14,27.80 72.27,28.37 73.41,28.94 74.55,29.49 75.69,30.04 76.82,30.59 77.96,31.13 79.10,31.66 80.24,32.18 81.38,32.70 82.51,33.22 83.65,33.23 84.79,32.62 85.93,32.01 87.06,31.41 88.20,30.82 89.34,30.24 90.48,29.66 91.61,29.09 92.75,28.53 93.89,27.98 95.02,27.43 96.16,26.88 97.30,26.35 98.44,25.82 99.57,25.29 100.71,24.78 101.85,24.27 102.99,23.76 104.12,23.26 105.26,22.77 106.40,22.28 107.54,21.80 108.68,21.32 109.81,20.85 110.95,20.39 112.09,19.93 113.23,19.48 114.36,19.03 115.50,18.59 116.64,18.15 117.77,17.72 118.91,17.29 120.05,16.87 121.19,16.77 122.32,17.47 123.46,18.16 124.60,18.85 125.74,19.53 126.88,20.20 128.01,20.86 129.15,21.51 130.29,22.16 131.43,22.80 132.56,23.43 133.70,24.05 134.84,24.67 135.98,25.28 137.11,25.88 138.25,26.47 139.39,27.06 140.52,27.64 141.66,28.21 142.80,28.78 143.94,29.34 145.07,29.89 146.21,30.44 147.35,30.98 148.49,31.51 149.62,32.04 150.76,32.56 151.90,33.08 153.04,33.58 154.17,34.09 155.31,34.58 156.45,35.07 157.59,35.56 158.73,36.04 159.86,36.51 161.00,36.98 162.14,37.44 163.27,37.89 164.41,38.35 165.55,38.79 166.69,39.23 167.82,39.67 168.96,40.10 170.10,40.52 171.24,40.94 172.38,41.35 173.51,41.76 174.65,42.17 175.79,42.57 176.92,42.96 178.06,42.41 179.20,41.69 180.34,40.98 181.48,40.27 182.61,39.58 183.75,38.89 184.89,38.35 186.02,38.79 187.16,39.23 188.30,39.67 189.44,40.10 190.58,40.52 191.71,40.94 192.85,41.35 193.99,41.76 195.12,42.17 196.26,42.57 197.40,42.96 198.54,43.35 199.67,43.74 200.81,44.12 201.95,44.50 203.09,44.87 204.23,45.24 205.36,45.60 206.50,45.96 207.64,46.31 208.77,46.66 209.91,47.01 211.05,47.35 212.19,47.69 213.33,48.03 214.46,48.36 215.60,48.68 216.74,49.00 217.88,49.32 219.01,49.64 220.15,49.95 221.29,50.25 222.42,50.56 223.56,50.86 224.70,51.15 225.84,51.45 226.98,51.74 228.11,52.02 229.25,52.30 230.39,52.58 231.52,52.86 232.66,53.13 233.80,53.40 234.94,53.67 236.08,53.93 237.21,54.19 238.35,54.44 239.49,54.70 240.62,54.95 241.76,55.20 242.90,55.44 244.04,55.68 245.17,55.92 246.31,56.16 247.45,56.39 248.59,56.62 249.73,56.85 250.86,57.07 252.00,57.29 253.14,57.51 254.27,57.73 255.41,57.94 256.55,58.16 257.69,58.36 258.83,58.57 259.96,58.77 261.10,58.98 262.24,59.18 263.38,59.37 264.51,59.57 265.65,59.76 266.79,59.95 267.92,60.14 269.06,60.32 270.20,60.51 271.34,60.69 272.48,60.87 273.61,61.04 274.75,61.22 275.89,61.39 277.02,61.56 278.16,61.73 279.30,61.90 280.44,62.06 281.58,62.22 282.71,62.38 283.85,62.54 284.99,62.70 286.12,62.85 287.26,63.01 288.40,63.16 289.54,63.31 290.67,63.46 291.81,63.60 292.95,63.75 294.09,63.89 295.22,64.03 296.36,64.17 297.50,64.30 298.64,64.44 299.77,64.57 300.91,64.71 302.05,64.84 303.19,64.97 304.33,65.10 305.46,65.22 306.60,65.35 307.74,65.47 308.88,65.59 310.01,65.71 311.15,65.83 312.29,65.95 313.42,66.06 314.56,66.18 315.70,66.29 316.84,66.41 317.97,66.52 319.11,66.63 320.25,66.73 321.39,66.84 322.52,66.95 323.66,67.05 324.80,67.15 325.94,67.25 327.08,67.36 328.21,67.45 329.35,67.55 330.49,67.65 331.62,67.75 332.76,67.84 333.90,67.93 335.04,68.03 336.17,68.12 337.31,68.21 338.45,68.30 339.59,68.39 340.72,68.47 341.86,68.56 343.00,68.64 344.14,68.73 345.27,68.81 346.41,68.89 347.55,68.97 348.69,69.05 349.83,69.13 350.96,69.21 352.10,69.29 353.24,69.36 354.38,69.44 355.51,69.51 356.65,69.59 357.79,69.66 358.92,69.73 360.06,69.80 361.20,69.87 362.34,69.94 363.47,70.01 364.61,70.08 365.75,70.15 366.89,70.21 368.02,70.28 369.16,70.34 370.30,70.41 371.44,70.47 372.58,70.53 373.71,70.59 374.85,70.65 375.99,70.71 377.12,70.77 378.26,70.83 379.40,70.89 380.54,70.95 381.67,71.00 382.81,71.06 383.95,71.11 385.09,71.17 386.22,71.22 387.36,71.28 388.50,71.33" fill="none" stroke="#00cd00" stroke-width="1.3" stroke-linejoin="bevel" shape-rendering="crispEdges"/>
<polyline points="24.50,56.10 25.64,55.63 26.77,55.15 27.91,54.69 29.05,54.22 30.19,53.75 31.32,53.29 32.46,52.83 33.60,52.37 34.74,51.92 35.88,51.47 37.01,51.02 38.15,50.57 39.29,50.12 40.43,49.68 41.56,49.23 42.70,48.80 43.84,48.36 44.98,47.92 46.11,47.49 47.25,47.06 48.39,46.63 49.52,46.20 50.66,45.78 51.80,45.36 52.94,44.94 54.07,44.52 55.21,44.10 56.35,43.69 57.49,43.28 58.62,42.87 59.76,42.46 60.90,42.05 62.04,41.65 63.18,41.25 64.31,40.85 65.45,40.45 66.59,40.05 67.73,39.66 68.86,39.27 70.00,38.88 71.14,38.49 72.27,38.10 73.41,37.72 74.55,37.34 75.69,36.96 76.82,36.58 77.96,36.20 79.10,35.83 80.24,37.55 81.38,40.91 82.51,44.25 83.65,47.58 84.79,50.89 85.93,54.18 87.06,57.46 88.20,59.22 89.34,58.73 90.48,58.25 91.61,57.76 92.75,57.28 93.89,56.80 95.02,56.32 96.16,55.85 97.30,55.37 98.44,54.90 99.57,54.44 100.71,53.97 101.85,53.51 102.99,53.05 104.12,52.59 105.26,52.13 106.40,51.68 107.54,51.23 108.68,50.78 109.81,50.33 110.95,49.88 112.09,49.44 113.23,49.00 114.36,48.56 115.50,48.13 116.64,47.69 117.77,47.26 118.91,46.83 120.05,46.40 121.19,45.98 122.32,45.55 123.46,45.13 124.60,44.71 125.74,44.30 126.88,43.88 128.01,43.47 129.15,43.06 130.29,42.65 131.43,42.24 132.56,41.84 133.70,41.43 134.84,41.03 135.98,40.63 137.11,40.24 138.25,39.84 139.39,39.45 140.52,39.06 141.66,38.67 142.80,38.28 143.94,37.90 145.07,37.52 146.21,37.13 147.35,36.76 148.49,36.38 149.62,36.00 150.76,35.63 151.90,35.26 153.04,34.89 154.17,34.52 155.31,34.15 156.45,33.79 157.59,33.43 158.73,33.07 159.86,32.71 161.00,32.35 162.14,31.99 163.27,31.64 164.41,31.29 165.55,30.94 166.69,30.59 167.82,30.24 168.96,29.90 170.10,29.56 171.24,29.21 172.38,32.17 173.51,35.55 174.65,38.92 175.79,42.28 176.92,45.61 178.06,48.63 179.20,48.20 180.34,47.76 181.48,47.33 182.61,46.90 183.75,46.47 184.89,46.04 186.02,45.62 187.16,45.20 188.30,44.78 189.44,44.36 190.58,43.95 191.71,43.53 192.85,43.12 193.99,42.71 195.12,42.31 196.26,41.90 197.40,41.50 198.54,41.10 199.67,40.70 200.81,40.30 201.95,39.91 203.09,39.51 204.23,39.12 205.36,38.73 206.50,38.35 207.64,37.96 208.77,37.58 209.91,37.20 211.05,36.82 212.19,36.44 213.33,36.06 214.46,35.69 215.60,35.32 216.74,34.95 217.88,34.58 219.01,34.21 220.15,33.85 221.29,33.48 222.42,33.12 223.56,32.76 224.70,32.41 225.84,32.05 226.98,31.70 228.11,31.34 229.25,30.99 230.39,30.65 231.52,30.30 232.66,29.95 233.80,29.61 234.94,29.27 236.08,28.93 237.21,28.59 238.35,28.25 239.49,27.92 240.62,27.58 241.76,27.25 242.90,26.92 244.04,26.59 245.17,26.27 246.31,25.94 247.45,25.62 248.59,25.30 249.73,24.98 250.86,24.66 252.00,24.34 253.14,24.03 254.27,23.71 255.41,23.40 256.55,23.09 257.69,22.78 258.83,22.47 259.96,22.17 261.10,21.86 262.24,21.56 263.38,21.26 264.51,21.71 265.65,25.15 266.79,28.57 267.92,28.98 269.06,28.64 270.20,28.30 271.34,27.97 272.48,27.63 273.61,27.30 274.75,26.97 275.89,26.64 277.02,26.32 278.16,25.99 279.30,25.67 280.44,25.34 281.58,25.02 282.71,24.71 283.85,24.39 284.99,24.07 286.12,23.76 287.26,23.45 288.40,23.13 289.54,22.83 290.67,22.52 291.81,22.21 292.95,21.91 294.09,21.60 295.22,21.30 296.36,21.00 297.50,20.70 298.64,20.40 299.77,20.11 300.91,19.81 302.05,19.52 303.19,19.23 304.33,18.94 305.46,18.65 306.60,18.36 307.74,18.08 308.88,17.79 310.01,17.51 311.15,17.23 312.29,16.95 313.42,16.67 314.56,16.40 315.70,16.12 316.84,15.84 317.97,15.57 319.11,15.30 320.25,15.03 321.39,14.76 322.52,14.49 323.66,14.23 324.80,13.96 325.94,13.70 327.08,13.44 328.21,13.17 329.35,12.91 330.49,12.66 331.62,12.40 332.76,12.14 333.90,11.89 335.04,11.64 336.17,11.38 337.31,11.13 338.45,10.88 339.59,10.63 340.72,10.39 341.86,10.14 343.00,9.90 344.14,9.65 345.27,9.41 346.41,9.17 347.55,8.93 348.69,8.69 349.83,8.45 350.96,8.22 352.10,7.98 353.24,7.75 354.38,7.52 355.51,7.29 356.65,7.06 357.79,6.83 358.92,6.60 360.06,6.37 361.20,6.15 362.34,5.92 363.47,5.70 364.61,5.47 365.75,5.25 366.89,5.03 368.02,4.81 369.16,4.60 370.30,4.38 371.44,4.16 372.58,3.95 373.71,3.73 374.85,3.52 375.99,3.31 377.12,3.10 378.26,2.89 379.40,2.68 380.54,2.47 381.67,2.27 382.81,2.06 383.95,1.86 385.09,1.65 386.22,1.45 387.36,1.25 388.50,1.05" fill="none" stroke="#ff0000" stroke-width="1.3" stroke-linejoin="bevel" shape-rendering="crispEdges"/>
<polyline points="24.50,86.50 25.64,86.50 26.77,86.50 27.91,86.50 29.05,86.50 30.19,86.50 31.32,86.50 32.46,86.50 33.60,86.50 34.74,86.50 35.88,86.50 37.01,86.50 38.15,86.50 39.29,86.50 40.43,86.50 41.56,86.50 42.70,86.50 43.84,86.50 44.98,86.50 46.11,86.50 47.25,86.50 48.39,86.50 49.52,86.50 50.66,86.50 51.80,86.50 52.94,86.50 54.07,86.50 55.21,86.50 56.35,86.50 57.49,86.50 58.62,86.50 59.76,86.50 60.90,86.50 62.04,86.50 63.18,86.50 64.31,86.50 65.45,86.50 66.59,86.50 67.73,86.50 68.86,86.50 70.00,86.50 71.14,86.50 72.27,86.50 73.41,86.50 74.55,86.50 75.69,85.39 76.82,79.83 77.96,74.28 79.10,68.72 80.24,63.17 81.38,57.61 82.51,52.06 83.65,46.50 84.79,52.06 85.93,57.61 87.06,63.17 88.20,68.72 89.34,74.28 90.48,79.83 91.61,85.39 92.75,86.50 93.89,86.50 95.02,86.50 96.16,86.50 97.30,86.50 98.44,86.50 99.57,86.50 100.71,86.50 101.85,86.50 102.99,86.50 104.12,86.50 105.26,86.50 106.40,86.50 107.54,86.50 108.68,86.50 109.81,86.50 110.95,86.50 112.09,86.50 113.23,86.50 114.36,86.50 115.50,86.50 116.64,86.50 117.77,86.50 118.91,86.50 120.05,86.50 121.19,86.50 122.32,86.50 123.46,86.50 124.60,86.50 125.74,86.50 126.88,86.50 128.01,86.50 129.15,86.50 130.29,86.50 131.43,86.50 132.56,86.50 133.70,86.50 134.84,86.50 135.98,86.50 137.11,86.50 138.25,86.50 139.39,86.50 140.52,86.50 141.66,86.50 142.80,86.50 143.94,86.50 145.07,86.50 146.21,86.50 147.35,86.50 148.49,86.50 149.62,86.50 150.76,86.50 151.90,86.50 153.04,86.50 154.17,86.50 155.31,86.50 156.45,86.50 157.59,86.50 158.73,86.50 159.86,86.50 161.00,86.50 162.14,86.50 163.27,86.50 164.41,86.50 165.55,86.50 166.69,86.50 167.82,82.38 168.96,77.24 170.10,72.09 171.24,66.94 172.38,61.79 173.51,56.65 174.65,51.50 175.79,56.65 176.92,61.79 178.06,66.94 179.20,72.09 180.34,77.24 181.48,82.38 182.61,86.50 183.75,86.50 184.89,86.50 186.02,86.50 187.16,86.50 188.30,86.50 189.44,86.50 190.58,86.50 191.71,86.50 192.85,86.50 193.99,86.50 195.12,86.50 196.26,86.50 197.40,86.50 198.54,86.50 199.67,86.50 200.81,86.50 201.95,86.50 203.09,86.50 204.23,86.50 205.36,86.50 206.50,86.50 207.64,86.50 208.77,86.50 209.91,86.50 211.05,86.50 212.19,86.50 213.33,86.50 214.46,86.50 215.60,86.50 216.74,86.50 217.88,86.50 219.01,86.50 220.15,86.50 221.29,86.50 222.42,86.50 223.56,86.50 224.70,86.50 225.84,86.50 226.98,86.50 228.11,86.50 229.25,86.50 230.39,86.50 231.52,86.50 232.66,86.50 233.80,86.50 234.94,86.50 236.08,86.50 237.21,86.50 238.35,86.50 239.49,86.50 240.62,86.50 241.76,86.50 242.90,86.50 244.04,86.50 245.17,86.50 246.31,86.50 247.45,86.50 248.59,86.50 249.73,86.50 250.86,86.50 252.00,86.50 253.14,86.50 254.27,86.50 255.41,86.50 256.55,86.50 257.69,86.50 258.83,86.50 259.96,82.33 261.10,78.17 262.24,74.00 263.38,69.83 264.51,65.67 265.65,61.50 266.79,65.67 267.92,69.83 269.06,74.00 270.20,78.17 271.34,82.33 272.48,86.50 273.61,86.50 274.75,86.50 275.89,86.50 277.02,86.50 278.16,86.50 279.30,86.50 280.44,86.50 281.58,86.50 282.71,86.50 283.85,86.50 284.99,86.50 286.12,86.50 287.26,86.50 288.40,86.50 289.54,86.50 290.67,86.50 291.81,86.50 292.95,86.50 294.09,86.50 295.22,86.50 296.36,86.50 297.50,86.50 298.64,86.50 299.77,86.50 300.91,86.50 302.05,86.50 303.19,86.50 304.33,86.50 305.46,86.50 306.60,86.50 307.74,86.50 308.88,86.50 310.01,86.50 311.15,86.50 312.29,86.50 313.42,86.50 314.56,86.50 315.70,86.50 316.84,86.50 317.97,86.50 319.11,86.50 320.25,86.50 321.39,86.50 322.52,86.50 323.66,86.50 324.80,86.50 325.94,86.50 327.08,86.50 328.21,86.50 329.35,86.50 330.49,86.50 331.62,86.50 332.76,86.50 333.90,86.50 335.04,86.50 336.17,86.50 337.31,86.50 338.45,86.50 339.59,86.50 340.72,86.50 341.86,86.50 343.00,86.50 344.14,86.50 345.27,86.50 346.41,86.50 347.55,86.50 348.69,86.50 349.83,86.50 350.96,86.50 352.10,86.50 353.24,86.50 354.38,86.50 355.51,86.50 356.65,86.50 357.79,86.50 358.92,86.50 360.06,86.50 361.20,86.50 362.34,86.50 363.47,86.50 364.61,86.50 365.75,86.50 366.89,86.50 368.02,86.50 369.16,86.50 370.30,86.50 371.44,86.50 372.58,86.50 373.71,86.50 374.85,86.50 375.99,86.50 377.12,86.50 378.26,86.50 379.40,86.50 380.54,86.50 381.67,86.50 382.81,86.50 383.95,86.50 385.09,86.50 386.22,86.50 387.36,86.50 388.50,86.50" fill="none" stroke="#0000ff" stroke-width="1.3" stroke-linejoin="bevel" shape-rendering="crispEdges"/>
<rect x="24" y="1" width="1" height="87" fill="#ffc000"/>
<rect x="24" y="89" width="1" height="14" fill="#ffc000"/>
</svg>
<span style="left:342px;top:396px;font:12px 'Liberation Sans',sans-serif;color:#000;line-height:14px;">8</span>
<span style="left:342px;top:417px;font:12px 'Liberation Sans',sans-serif;color:#000;line-height:14px;">4</span>
<span style="left:351px;top:453px;font:12px 'Liberation Sans',sans-serif;color:#000;line-height:14px;">0</span>
<span style="left:435px;top:453px;font:12px 'Liberation Sans',sans-serif;color:#000;line-height:14px;">20</span>
<span style="left:526px;top:453px;font:12px 'Liberation Sans',sans-serif;color:#000;line-height:14px;">40</span>
<span style="left:617px;top:453px;font:12px 'Liberation Sans',sans-serif;color:#000;line-height:14px;">60</span>
<span style="left:700px;top:453px;font:12px 'Liberation Sans',sans-serif;color:#000;line-height:14px;">80</span></body></html>
